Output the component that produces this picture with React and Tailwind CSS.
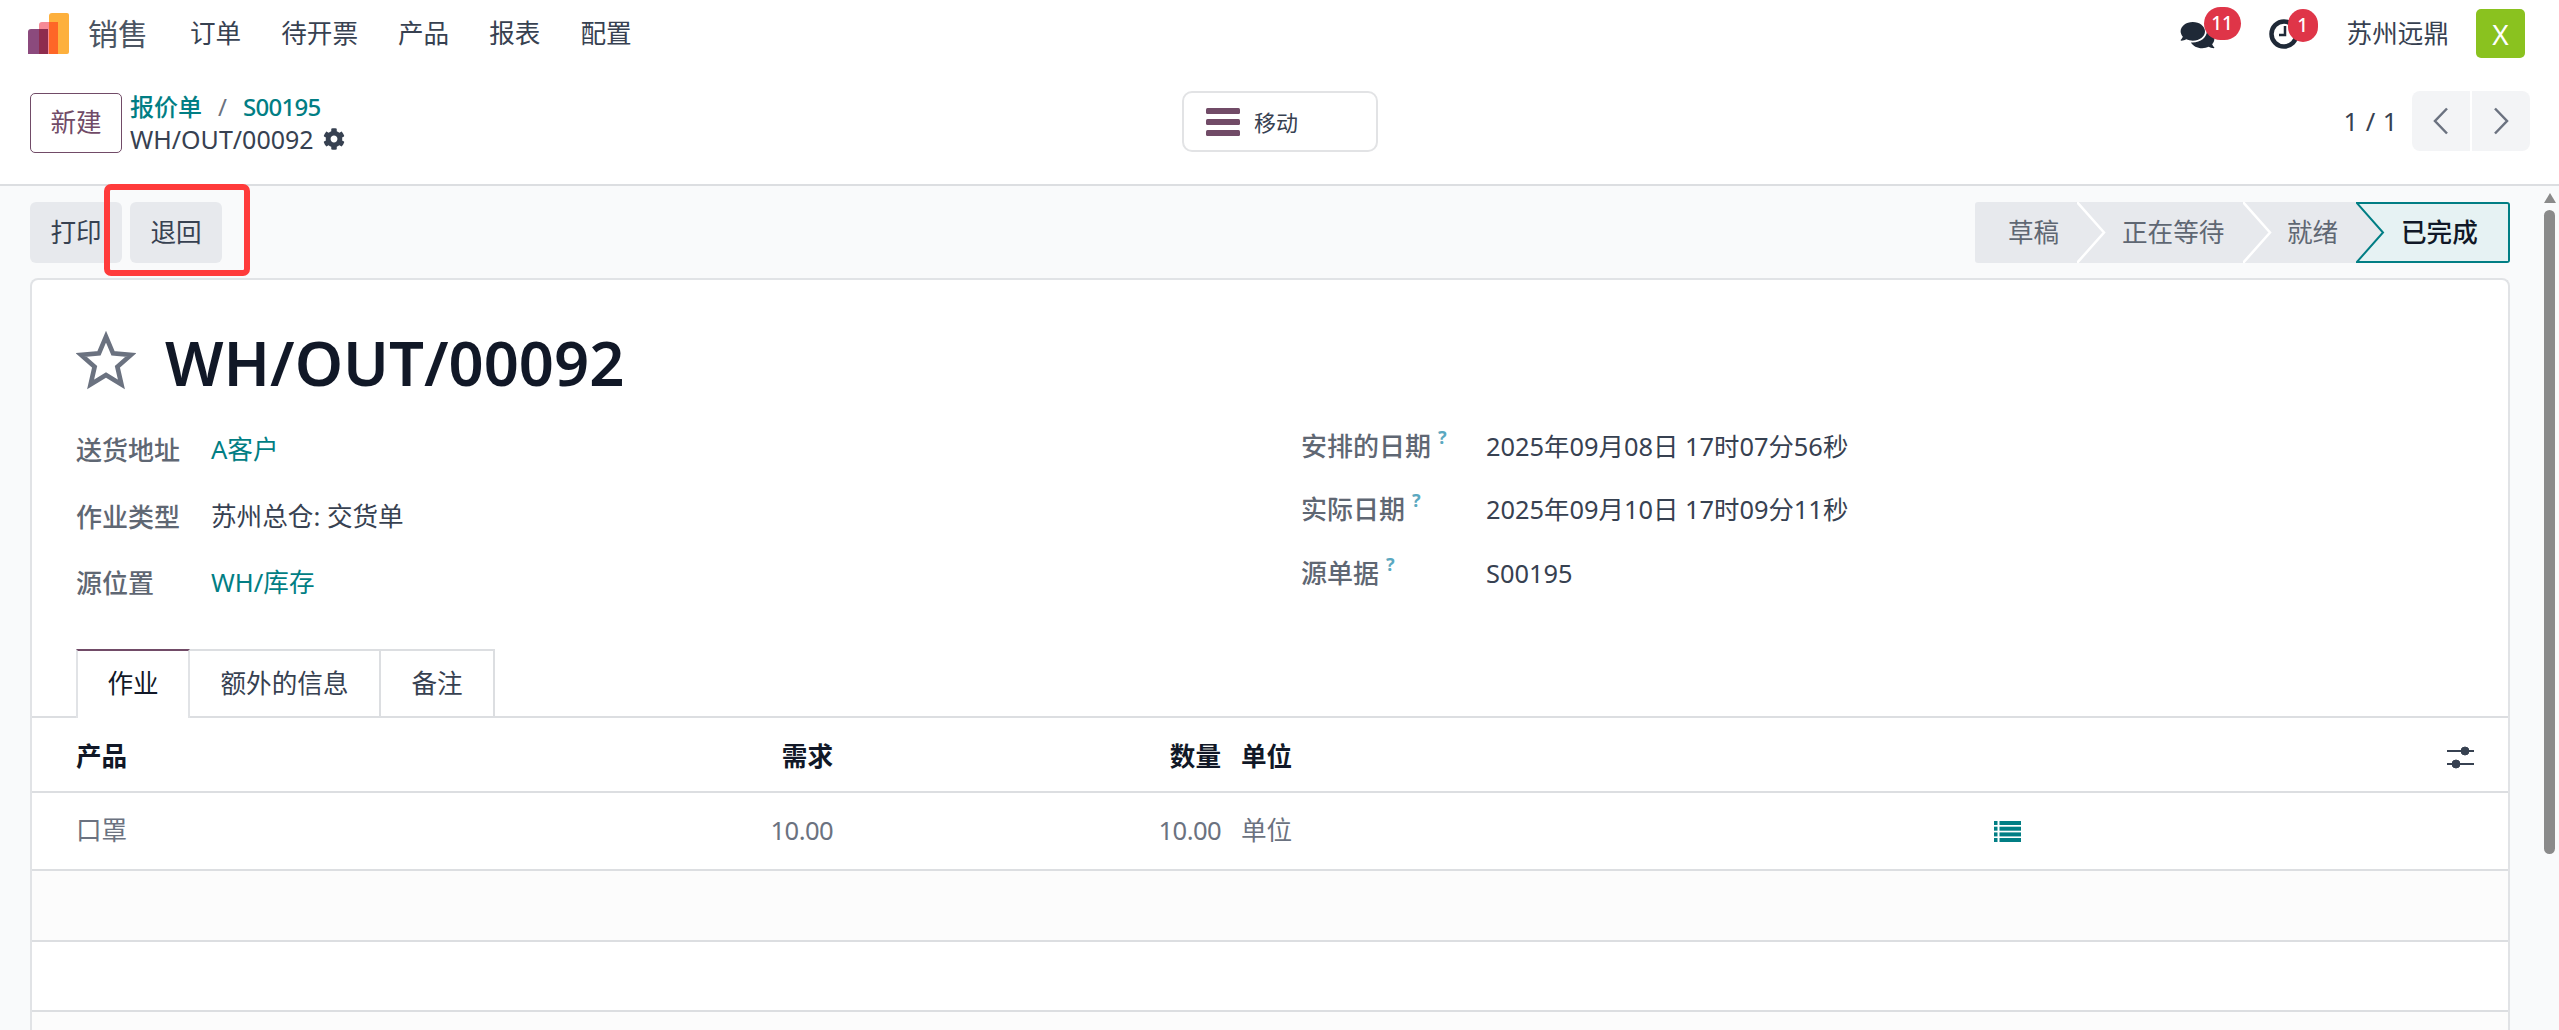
import { FaCog, FaComments } from 'react-icons/fa'

const menu = ['订单', '待开票', '产品', '报表', '配置']

function Logo() {
  return (
    <svg width="41" height="41" viewBox="0 0 41 41" className="shrink-0">
      <path d="M24 0h15a2 2 0 0 1 2 2v37a2 2 0 0 1-2 2H21V3a3 3 0 0 1 3-3z" fill="#fdb03d" />
      <path d="M14 9h16v32H11V12a3 3 0 0 1 3-3z" fill="#f68a96" />
      <path d="M21 9h9v32h-9z" fill="#fe6627" />
      <path d="M3 16h17v25H0V19a3 3 0 0 1 3-3z" fill="#8b4a7d" />
      <path d="M11 16h9v25h-9z" fill="#8e2c4e" />
    </svg>
  )
}

function ClockIcon() {
  return (
    <svg width="30" height="30" viewBox="0 0 30 30">
      <circle cx="15" cy="15" r="12.5" fill="none" stroke="#1f2937" strokeWidth="4.5" />
      <path d="M16 7v9H10" fill="none" stroke="#1f2937" strokeWidth="2.5" />
    </svg>
  )
}

function Field({ label, help, valueClass, children, labelWidth, height }) {
  return (
    <div className={`flex items-center ${height}`}>
      <div className={`${labelWidth} shrink-0 flex items-start text-[26px] text-[#5f6773] font-medium`}>
        <span>{label}</span>
        {help && <span className="ml-[7px] -mt-[5px] text-[18px] leading-[24px] font-bold text-[#5ba8c0]">?</span>}
      </div>
      <div className={valueClass || 'text-[#374151]'}>{children}</div>
    </div>
  )
}

function ListIcon() {
  return (
    <svg width="27" height="21" viewBox="0 0 27 21" fill="#017e84">
      {[0, 5.7, 11.4, 17].map((y) => (
        <g key={y}>
          <rect x="0" y={y} width="3.5" height="4" />
          <rect x="5.5" y={y} width="21.5" height="4" />
        </g>
      ))}
    </svg>
  )
}

function SlidersIcon() {
  return (
    <svg width="27" height="23" viewBox="0 0 27 23" fill="#374151" stroke="#374151">
      <path d="M0 5h27M0 18h27" strokeWidth="2" />
      <circle cx="18" cy="5" r="4" />
      <circle cx="9" cy="18" r="4" />
    </svg>
  )
}

export default function App() {
  return (
    <div className="relative h-[1030px] w-full overflow-hidden flex flex-col bg-white text-[25.6px] leading-[32px] text-[#374151] font-['Noto_Sans','Noto_Sans_CJK_SC',sans-serif]">
      {/* top nav */}
      <header className="h-[67px] flex items-center pl-[28px] pr-[34px] shrink-0">
        <div className="-mt-[1px]"><Logo /></div>
        <span className="ml-[19px] text-[30px] text-[#4b5563]">销售</span>
        <nav className="ml-[42px] flex gap-[40px]">
          {menu.map((m) => <span key={m}>{m}</span>)}
        </nav>
        <div className="ml-auto flex items-center">
          <div className="relative w-[35px] h-[27px]">
            <FaComments className="text-[#1f2937] w-[35px] h-[30px]" />
            <span className="absolute left-[24px] -top-[13px] w-[37px] h-[33px] rounded-full bg-[#df3548] text-white text-[19px] leading-[33px] text-center font-medium">11</span>
          </div>
          <div className="relative ml-[54px] w-[29px] h-[30px]">
            <ClockIcon />
            <span className="absolute left-[19px] -top-[10px] w-[30px] h-[33px] rounded-full bg-[#df3548] text-white text-[19px] leading-[33px] text-center font-medium">1</span>
          </div>
          <span className="ml-[49px]">苏州远鼎</span>
          <div className="ml-[27px] w-[49px] h-[49px] rounded-[5px] bg-[#8ac21f] text-white text-[28px] flex items-center justify-center">X</div>
        </div>
      </header>

      {/* control panel */}
      <div className="h-[119px] shrink-0 border-b-2 border-[#dcdee1] pt-[24px] pl-[30px] pr-[29px] flex items-start">
        <div className="w-[1152px] flex items-start">
          <button className="w-[92px] h-[60px] border border-[#714b67] rounded-[5px] text-[#714b67] mt-[2px]">新建</button>
          <div className="ml-[8px]">
            <div className="flex text-[24px] font-medium text-[#017e84]">
              <span>报价单</span>
              <span className="ml-[16px] font-normal text-[#6b7280]">/</span>
              <span className="ml-[16px] tracking-[-0.7px]">S00195</span>
            </div>
            <div className="flex items-center text-[25px]">
              <span>WH/OUT/00092</span>
              <FaCog className="ml-[9px] w-[22px] h-[22px] text-[#374151]" />
            </div>
          </div>
        </div>
        <button className="w-[196px] h-[61px] border-2 border-[#e2e3e5] rounded-[10px] flex items-center pl-[22px]">
          <svg width="34" height="28" viewBox="0 0 34 28" fill="#714b67">
            <rect y="0" width="34" height="6" rx="1.5" />
            <rect y="11" width="34" height="6" rx="1.5" />
            <rect y="22" width="34" height="6" rx="1.5" />
          </svg>
          <span className="ml-[14px] text-[22px]">移动</span>
        </button>
        <div className="ml-auto flex items-center">
          <span className="mt-[2px] tracking-[0.5px]">1 / 1</span>
          <div className="ml-[14px] flex gap-[2px]">
            <button className="w-[58px] h-[60px] bg-[#f3f4f6] rounded-l-[8px] flex items-center justify-center">
              <svg width="16" height="28" viewBox="0 0 16 28" fill="none" stroke="#6b7280" strokeWidth="2.5"><path d="M14 1.5 2 14l12 12.5" /></svg>
            </button>
            <button className="w-[58px] h-[60px] bg-[#f3f4f6] rounded-r-[8px] flex items-center justify-center">
              <svg width="16" height="28" viewBox="0 0 16 28" fill="none" stroke="#6b7280" strokeWidth="2.5"><path d="M2 1.5 14 14 2 26.5" /></svg>
            </button>
          </div>
        </div>
      </div>

      <div className="flex-1 min-h-0 flex bg-[#f9fafb]">
        <main className="flex-1 min-w-0 flex flex-col pl-[30px] pr-[31px] pt-[16px]">
          {/* action buttons + status bar */}
          <div className="h-[61px] shrink-0 flex">
            <div className="flex gap-[8px]">
              <button className="w-[92px] h-[61px] bg-[#e7e9ed] rounded-[6px]">打印</button>
              <button className="w-[92px] h-[61px] bg-[#e7e9ed] rounded-[6px]">退回</button>
            </div>
            <div className="ml-auto flex h-[61px] text-[#5f6773]">
              <div className="w-[102px] bg-[#e7e9ed] pl-[33px] leading-[61px] rounded-l-[3px]">草稿</div>
              <div className="relative w-[166px] bg-[#e7e9ed] pl-[45px] leading-[61px]">
                <svg width="30" height="61" viewBox="0 0 30 61" fill="none" stroke="#fff" strokeWidth="2.5" className="absolute left-0 top-0"><path d="M0 0 27 30.5 0 61" /></svg>
                正在等待
              </div>
              <div className="relative w-[113px] bg-[#e7e9ed] pl-[44px] leading-[61px]">
                <svg width="30" height="61" viewBox="0 0 30 61" fill="none" stroke="#fff" strokeWidth="2.5" className="absolute left-0 top-0"><path d="M0 0 27 30.5 0 61" /></svg>
                就绪
              </div>
              <div className="relative w-[154px] bg-[#e6f2f3] border-y-2 border-r-2 border-[#017e84] rounded-r-[3px] pl-[45px] leading-[57px] text-[#111827] font-medium">
                <svg width="30" height="61" viewBox="0 0 30 61" className="absolute left-0 -top-[2px]">
                  <path d="M0 0 27 30.5 0 61z" fill="#e7e9ed" />
                  <path d="M0 0 27 30.5 0 61" fill="none" stroke="#017e84" strokeWidth="2" />
                </svg>
                已完成
              </div>
            </div>
          </div>

          {/* form sheet */}
          <section className="mt-[15px] flex-1 min-h-0 flex flex-col bg-white border-x-2 border-t-2 border-[#e1e3e6] rounded-t-[8px]">
            <div className="pl-[44px] pt-[50px] flex items-center h-[113px] shrink-0">
              <svg width="60" height="59" viewBox="0 0 58 57" className="shrink-0 -mt-[2px]">
                <path d="M29 5.5 35.8 21.6 53 23.1 40 34.6 43.9 51.6 29 42.6 14.1 51.6 18 34.6 5 23.1 22.2 21.6Z" fill="none" stroke="#6b7280" strokeWidth="4.5" />
              </svg>
              <h1 className="ml-[29px] text-[61.5px] leading-[62px] font-semibold text-[#111827]">WH/OUT/00092</h1>
            </div>

            <div className="flex pl-[44px] mt-[21px] shrink-0 h-[200px]">
              <div className="w-[1225px] pt-[2px]">
                <Field label="送货地址" labelWidth="w-[135px]" height="h-[68px]" valueClass="text-[#017e84]">A客户</Field>
                <Field label="作业类型" labelWidth="w-[135px]" height="h-[66px]">苏州总仓: 交货单</Field>
                <Field label="源位置" labelWidth="w-[135px]" height="h-[66px]" valueClass="text-[#017e84]">WH/库存</Field>
              </div>
              <div className="text-[25.4px]">
                <Field label="安排的日期" help labelWidth="w-[185px]" height="h-[63px]">2025年09月08日 17时07分56秒</Field>
                <Field label="实际日期" help labelWidth="w-[185px]" height="h-[64px]">2025年09月10日 17时09分11秒</Field>
                <Field label="源单据" help labelWidth="w-[185px]" height="h-[64px]">S00195</Field>
              </div>
            </div>

            {/* tabs */}
            <div className="mt-[35px] h-[69px] shrink-0 flex pl-[44px] border-b-2 border-[#dcdee1]">
              <div className="w-[114px] border-x-2 border-[#e1e3e6] border-t-2 border-t-[#714b67] text-center leading-[66px] text-[#111827] bg-white h-[69px]">作业</div>
              <div className="w-[191px] border-r-2 border-t-2 border-[#dcdee1] text-center leading-[66px]">额外的信息</div>
              <div className="w-[114px] border-r-2 border-t-2 border-[#dcdee1] text-center leading-[66px]">备注</div>
            </div>

            {/* move lines */}
            <div className="h-[75px] shrink-0 pt-[5px] grid grid-cols-[757px_388px_773px_1fr] items-center pl-[44px] pr-[34px] border-b-2 border-[#dcdee1] font-bold text-[#111827]">
              <div className="flex justify-between"><span>产品</span><span>需求</span></div>
              <div className="text-right">数量</div>
              <div className="pl-[20px]">单位</div>
              <div className="flex justify-end"><SlidersIcon /></div>
            </div>
            <div className="h-[78px] shrink-0 grid grid-cols-[757px_388px_773px_1fr] items-center pl-[44px] pr-[34px] border-b-2 border-[#dcdee1] text-[#6b7280]">
              <div className="flex justify-between"><span>口罩</span><span className="tracking-[-0.6px]">10.00</span></div>
              <div className="text-right tracking-[-0.6px]">10.00</div>
              <div className="pl-[20px]">单位</div>
              <div><ListIcon /></div>
            </div>
            <div className="h-[71px] shrink-0 bg-[#fcfcfc] border-b-2 border-[#dcdee1]" />
            <div className="h-[70px] shrink-0 border-b-2 border-[#dcdee1]" />
            <div className="flex-1 bg-[#fcfcfc]" />
          </section>
        </main>

        {/* scrollbar */}
        <aside className="w-[18px] shrink-0 pt-[7px] pl-[3px]">
          <div className="w-0 h-0 border-x-[6px] border-x-transparent border-b-[10px] border-b-[#8a8a8a]" />
          <div className="mt-[7px] w-[11px] h-[644px] rounded-full bg-[#8a8a8a]" />
        </aside>
      </div>

      {/* annotation */}
      <div className="absolute left-[104px] top-[184px] w-[146px] h-[92px] border-[6px] border-[#ff3b3b] rounded-[7px]" />
    </div>
  )
}
